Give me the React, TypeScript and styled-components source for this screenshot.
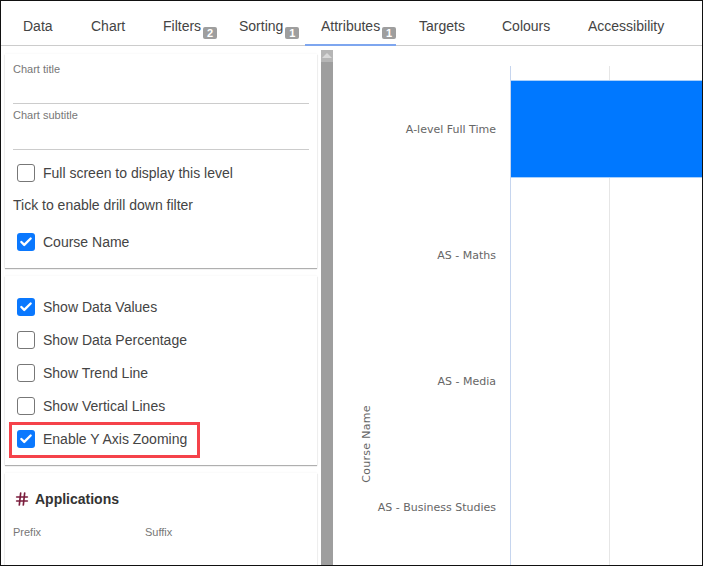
import React from 'react';
import styled, { createGlobalStyle } from 'styled-components';
import { Check, Hash } from 'lucide-react';

const GlobalStyle = createGlobalStyle`
  html, body {
    margin: 0;
    padding: 0;
    background: white;
  }
  * {
    box-sizing: border-box;
  }
`;

const Frame = styled.div`
  width: 703px;
  height: 566px;
  border: 1px solid #111;
  overflow: hidden;
  display: flex;
  flex-direction: column;
  background: white;
  font-family: 'Liberation Sans', Arial, sans-serif;
  color: #444;
`;

const TabBar = styled.div`
  height: 45px;
  flex: none;
  display: flex;
  border-bottom: 1px solid #ccc;
`;

const Tab = styled.div<{ $width: number; $active?: boolean }>`
  width: ${props => props.$width}px;
  height: 45px;
  margin-right: ${props => (props.$active ? 1 : 0)}px;
  padding: 17px 0 0 ${props => (props.$active ? 16 : 22)}px;
  font-size: 14px;
  line-height: 16px;
  color: #444;
  white-space: nowrap;
  display: flex;
  align-items: flex-start;
  border-bottom: ${props => (props.$active ? '2px solid #7ea6ef' : 'none')};
`;

const Badge = styled.span`
  background: #9e9e9e;
  color: white;
  font-size: 11px;
  font-weight: bold;
  line-height: 12px;
  height: 12px;
  width: 14px;
  border-radius: 2px;
  text-align: center;
  margin: 9px 0 0 2px;
`;

const Body = styled.div`
  flex: 1;
  min-height: 0;
  display: flex;
`;

const Sidebar = styled.div`
  width: 319px;
  flex: none;
  padding: 8px 0 0 4px;
  display: flex;
  flex-direction: column;
  gap: 8px;
`;

const Card = styled.div<{ $height: number; $top?: number }>`
  width: 312px;
  height: ${props => props.$height}px;
  flex: none;
  padding: ${props => props.$top ?? 0}px 8px 0;
  background: white;
  box-shadow: 0 1px 1px rgba(0, 0, 0, 0.3), 0 0 2px rgba(0, 0, 0, 0.06);
`;

const TextField = styled.div`
  height: 46px;
  padding-top: 5px;
  border-bottom: 1px solid #ccc;
  font-size: 11px;
  line-height: 12px;
  color: #777;
`;

const CheckRow = styled.div<{ $top?: number }>`
  display: flex;
  align-items: center;
  gap: 8px;
  height: 33px;
  padding-left: 4px;
  margin-top: ${props => props.$top ?? 0}px;
  font-size: 14px;
  color: #444;
`;

const Box = styled.span<{ $checked?: boolean }>`
  width: 18px;
  height: 18px;
  flex: none;
  display: flex;
  align-items: center;
  justify-content: center;
  border-radius: 3px;
  background: ${props => (props.$checked ? '#0a78fe' : 'white')};
  border: ${props => (props.$checked ? 'none' : '1px solid #777')};
  color: white;
`;

const Hint = styled.div`
  font-size: 14px;
  line-height: 16px;
  margin: 8px 0 12px;
  color: #444;
`;

const Highlight = styled.div`
  position: relative;
  &::after {
    content: '';
    position: absolute;
    box-sizing: border-box;
    left: -4px;
    top: 0;
    width: 191px;
    height: 36px;
    border: 3px solid #f5424a;
  }
`;

const CardTitle = styled.div`
  display: flex;
  align-items: center;
  gap: 5px;
  padding: 18px 0 0 1px;
  font-size: 14px;
  line-height: 16px;
  font-weight: bold;
  color: #333;
`;

const HashIcon = styled(Hash)`
  color: #7a1c3c;
`;

const AffixRow = styled.div`
  display: flex;
  margin-top: 19px;
  font-size: 11px;
  line-height: 12px;
  color: #777;
`;

const AffixLabel = styled.div`
  width: 132px;
`;

const ScrollTrack = styled.div`
  width: 12px;
  margin: 4px 0 0 1px;
  flex: none;
  background: #9e9e9e;
  display: flex;
  flex-direction: column;
`;

const ScrollCap = styled.div`
  height: 12px;
  background: #b5b5b5;
  display: flex;
  justify-content: center;
  padding-top: 3px;
  &::before {
    content: '';
    border-left: 5px solid transparent;
    border-right: 5px solid transparent;
    border-bottom: 5px solid #d8d8d8;
    height: 0;
  }
`;

const ChartArea = styled.div`
  flex: 1;
  min-width: 0;
`;

const ChartSvg = styled.svg`
  display: block;
  font-family: 'DejaVu Sans', Verdana, sans-serif;
`;

const courses = [
  { name: 'A-level Full Time', y: 83 },
  { name: 'AS - Maths', y: 209 },
  { name: 'AS - Media', y: 335 },
  { name: 'AS - Business Studies', y: 461 },
];

// chart is offset from the page: x - 333, y - 46
const CourseChart = () => (
  <ChartSvg width={369} height={519} viewBox="0 0 369 519">
    <line x1={177.5} y1={20} x2={177.5} y2={519} stroke="#c6d5ee" />
    <line x1={276.5} y1={20} x2={276.5} y2={519} stroke="#e6e6e6" />
    <rect x={178} y={34} width={191} height={97} fill="#0078ff" />
    <line x1={178} y1={34.5} x2={369} y2={34.5} stroke="#a9d0fb" />
    <line x1={178} y1={131.5} x2={369} y2={131.5} stroke="#a9d0fb" />
    {courses.map(course => (
      <text
        key={course.name}
        x={163}
        y={course.y + 4}
        textAnchor="end"
        fontSize={11}
        fill="#666"
      >
        {course.name}
      </text>
    ))}
    <text
      transform="translate(37 398) rotate(-90)"
      textAnchor="middle"
      fontSize={11}
      letterSpacing={0.3}
      fill="#666"
    >
      Course Name
    </text>
  </ChartSvg>
);

const tabs = [
  { label: 'Data', width: 68 },
  { label: 'Chart', width: 72 },
  { label: 'Filters', width: 76, badge: 2 },
  { label: 'Sorting', width: 88, badge: 1 },
  { label: 'Attributes', width: 91, badge: 1, active: true },
  { label: 'Targets', width: 83 },
  { label: 'Colours', width: 86 },
  { label: 'Accessibility', width: 130 },
];

const Option = ({ label, checked }: { label: string; checked?: boolean }) => (
  <CheckRow>
    <Box $checked={checked}>{checked && <Check size={14} strokeWidth={4} />}</Box>
    {label}
  </CheckRow>
);

export default function App() {
  return (
    <Frame>
      <GlobalStyle />
      <TabBar>
        {tabs.map(tab => (
          <Tab key={tab.label} $width={tab.width} $active={tab.active}>
            {tab.label}
            {tab.badge && <Badge>{tab.badge}</Badge>}
          </Tab>
        ))}
      </TabBar>
      <Body>
        <Sidebar>
          <Card $height={214} $top={4}>
            <TextField>Chart title</TextField>
            <TextField>Chart subtitle</TextField>
            <CheckRow $top={6}>
              <Box />
              Full screen to display this level
            </CheckRow>
            <Hint>Tick to enable drill down filter</Hint>
            <Option label="Course Name" checked />
          </Card>
          <Card $height={189} $top={14}>
            <Option label="Show Data Values" checked />
            <Option label="Show Data Percentage" />
            <Option label="Show Trend Line" />
            <Option label="Show Vertical Lines" />
            <Highlight>
              <Option label="Enable Y Axis Zooming" checked />
            </Highlight>
          </Card>
          <Card $height={100}>
            <CardTitle>
              <HashIcon size={16} strokeWidth={2.5} />
              Applications
            </CardTitle>
            <AffixRow>
              <AffixLabel>Prefix</AffixLabel>
              <AffixLabel>Suffix</AffixLabel>
            </AffixRow>
          </Card>
        </Sidebar>
        <ScrollTrack>
          <ScrollCap />
        </ScrollTrack>
        <ChartArea>
          <CourseChart />
        </ChartArea>
      </Body>
    </Frame>
  );
}
